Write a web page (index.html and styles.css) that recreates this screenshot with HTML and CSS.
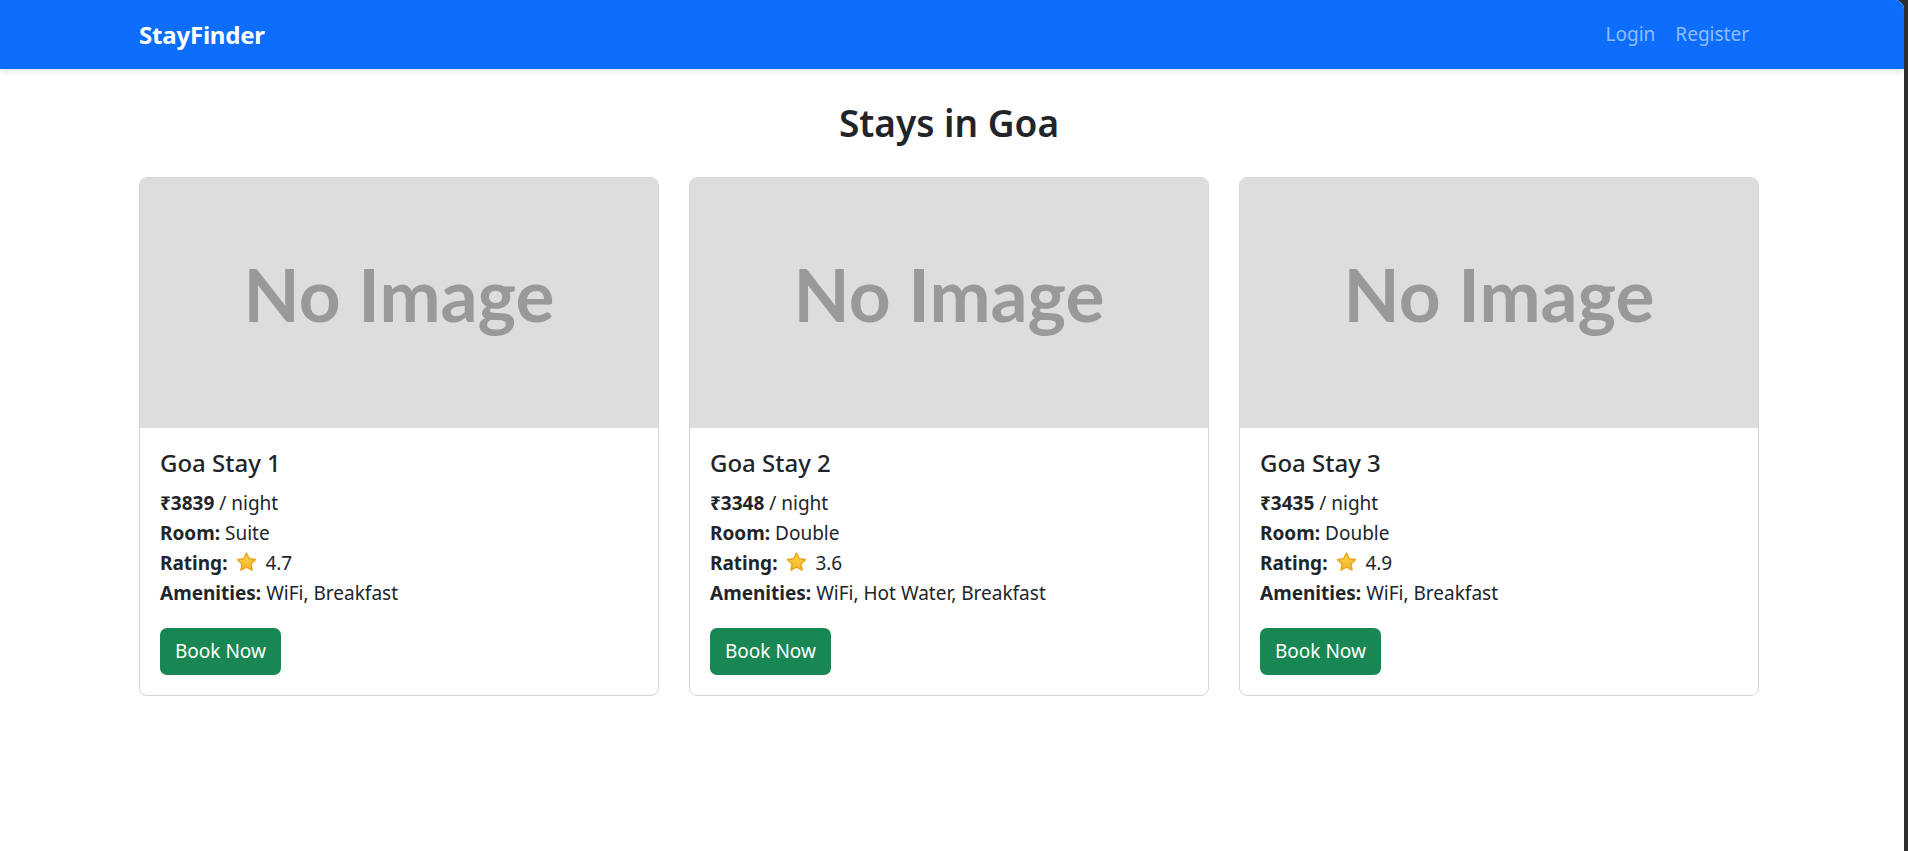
FILE: index.html
```html
<!DOCTYPE html>
<html lang="en">
<head>
<meta charset="utf-8">
<title>StayFinder</title>
<link rel="stylesheet" href="styles.css">
</head>
<body>
<div class="page">
  <nav class="navbar">
    <div class="nav-inner">
      <a class="brand" href="#">StayFinder</a>
      <div class="nav-links">
        <a class="nav-link" href="#">Login</a>
        <a class="nav-link" href="#">Register</a>
      </div>
    </div>
  </nav>

  <main class="container">
    <h2 class="page-title">Stays in Goa</h2>
    <div class="cards">
      <div class="card">
        <div class="card-img"><span>No Image</span></div>
        <div class="card-body">
          <h5 class="card-title">Goa Stay 1</h5>
          <div class="info">
            <div><b>₹3839</b> / night</div>
            <div><b>Room:</b> Suite</div>
            <div><b>Rating:</b> <svg class="star" viewBox="0 0 24 24"><defs><linearGradient id="sg1" x1="0" y1="0" x2="0" y2="1"><stop offset="0" stop-color="#ffd84a"/><stop offset="1" stop-color="#f0b12a"/></linearGradient></defs><path d="M12 2.2l2.9 6 6.5.8-4.8 4.5 1.2 6.5L12 16.8l-5.8 3.2 1.2-6.5L2.6 9l6.5-.8z" fill="url(#sg1)" stroke="#e9a820" stroke-width="1.6" stroke-linejoin="round"/></svg> 4.7</div>
            <div><b>Amenities:</b> WiFi, Breakfast</div>
          </div>
          <a class="btn" href="#">Book Now</a>
        </div>
      </div>

      <div class="card">
        <div class="card-img"><span>No Image</span></div>
        <div class="card-body">
          <h5 class="card-title">Goa Stay 2</h5>
          <div class="info">
            <div><b>₹3348</b> / night</div>
            <div><b>Room:</b> Double</div>
            <div><b>Rating:</b> <svg class="star" viewBox="0 0 24 24"><defs><linearGradient id="sg2" x1="0" y1="0" x2="0" y2="1"><stop offset="0" stop-color="#ffd84a"/><stop offset="1" stop-color="#f0b12a"/></linearGradient></defs><path d="M12 2.2l2.9 6 6.5.8-4.8 4.5 1.2 6.5L12 16.8l-5.8 3.2 1.2-6.5L2.6 9l6.5-.8z" fill="url(#sg2)" stroke="#e9a820" stroke-width="1.6" stroke-linejoin="round"/></svg> 3.6</div>
            <div><b>Amenities:</b> WiFi, Hot Water, Breakfast</div>
          </div>
          <a class="btn" href="#">Book Now</a>
        </div>
      </div>

      <div class="card">
        <div class="card-img"><span>No Image</span></div>
        <div class="card-body">
          <h5 class="card-title">Goa Stay 3</h5>
          <div class="info">
            <div><b>₹3435</b> / night</div>
            <div><b>Room:</b> Double</div>
            <div><b>Rating:</b> <svg class="star" viewBox="0 0 24 24"><defs><linearGradient id="sg3" x1="0" y1="0" x2="0" y2="1"><stop offset="0" stop-color="#ffd84a"/><stop offset="1" stop-color="#f0b12a"/></linearGradient></defs><path d="M12 2.2l2.9 6 6.5.8-4.8 4.5 1.2 6.5L12 16.8l-5.8 3.2 1.2-6.5L2.6 9l6.5-.8z" fill="url(#sg3)" stroke="#e9a820" stroke-width="1.6" stroke-linejoin="round"/></svg> 4.9</div>
            <div><b>Amenities:</b> WiFi, Breakfast</div>
          </div>
          <a class="btn" href="#">Book Now</a>
        </div>
      </div>
    </div>
  </main>
</div>
</body>
</html>
```

FILE: styles.css
```css
* { box-sizing: border-box; }

html, body {
  margin: 0;
  padding: 0;
  height: 100%;
}

body {
  background: #2e2e2e;
  font-family: "Noto Sans", "Open Sans", sans-serif;
  color: #212529;
  font-size: 20px;
  line-height: 1.5;
}

.page {
  width: 1904px;
  height: 851px;
  background: #fff;
  border-top-right-radius: 9px;
  overflow: hidden;
}

.navbar {
  background: #0d6efd;
  height: 69px;
  box-shadow: 0 2px 6px rgba(0, 0, 0, 0.12);
  position: relative;
}

.nav-inner {
  width: 1620px;
  margin-left: 139px;
  height: 100%;
  display: flex;
  align-items: center;
  justify-content: space-between;
}

.brand {
  color: #fff;
  font-weight: 700;
  font-size: 24px;
  text-decoration: none;
  letter-spacing: -0.2px;
}

.nav-links {
  display: flex;
}

.nav-link {
  color: rgba(255, 255, 255, 0.55);
  text-decoration: none;
  font-size: 19px;
  padding: 0 10px;
}

.container {
  width: 1620px;
  margin-left: 139px;
  padding-top: 30px;
}

.page-title {
  margin: 0 0 30px;
  text-align: center;
  font-size: 37px;
  font-weight: 600;
  line-height: 48px;
  color: #212529;
}

.cards {
  display: grid;
  grid-template-columns: repeat(3, 1fr);
  column-gap: 30px;
}

.card {
  border: 1px solid #d5d6d7;
  border-radius: 8px;
  overflow: hidden;
  background: #fff;
}

.card-img {
  height: 250px;
  background: #dddddd;
  display: flex;
  align-items: center;
  justify-content: center;
}

.card-img span {
  font-family: "Lato", sans-serif;
  font-weight: 700;
  font-size: 73px;
  color: #999999;
  line-height: 1;
  margin-top: -18px;
}

.card-body {
  padding: 20px;
}

.card-title {
  margin: 0 0 10px;
  font-size: 24px;
  font-weight: 500;
  line-height: 30px;
}

.info {
  font-size: 19px;
  line-height: 30px;
  margin-bottom: 20px;
}

.info b {
  font-weight: 700;
}

.star {
  width: 23px;
  height: 23px;
  vertical-align: -4px;
  margin: 0 2px 0 3px;
}

.btn {
  display: inline-block;
  background: #198754;
  color: #fff;
  text-decoration: none;
  font-size: 19px;
  line-height: 30px;
  padding: 8px 15px;
  border-radius: 7px;
  height: 47px;
}
```
